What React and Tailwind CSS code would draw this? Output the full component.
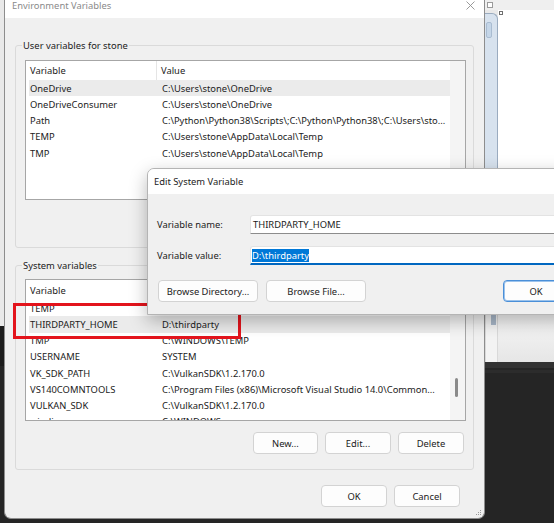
import React from "react";

const userRows = [
  ["OneDrive", "C:\\Users\\stone\\OneDrive", true],
  ["OneDriveConsumer", "C:\\Users\\stone\\OneDrive", false],
  ["Path", "C:\\Python\\Python38\\Scripts\\;C:\\Python\\Python38\\;C:\\Users\\sto...", false],
  ["TEMP", "C:\\Users\\stone\\AppData\\Local\\Temp", false],
  ["TMP", "C:\\Users\\stone\\AppData\\Local\\Temp", false],
];

const sysRows = [
  ["TEMP", "C:\\WINDOWS\\TEMP", false],
  ["THIRDPARTY_HOME", "D:\\thirdparty", true],
  ["TMP", "C:\\WINDOWS\\TEMP", false],
  ["USERNAME", "SYSTEM", false],
  ["VK_SDK_PATH", "C:\\VulkanSDK\\1.2.170.0", false],
  ["VS140COMNTOOLS", "C:\\Program Files (x86)\\Microsoft Visual Studio 14.0\\Common...", false],
  ["VULKAN_SDK", "C:\\VulkanSDK\\1.2.170.0", false],
  ["windir", "C:\\WINDOWS", false],
];

function Row({ name, value, selected }) {
  return (
    <div
      className={
        selected
          ? "flex h-[16.25px] shrink-0 items-center bg-[#ebebeb]"
          : "flex h-[16.25px] shrink-0 items-center"
      }
    >
      <div className="w-[133px] shrink-0 truncate pl-[1px]">{name}</div>
      <div className="flex-1 whitespace-nowrap">{value}</div>
    </div>
  );
}

function ListBox({ rows, height, headerH, scrollThumb }) {
  return (
    <div
      className={
        height === 140
          ? "ml-[9px] flex h-[140px] w-[441px] border border-[#a6a6a6] bg-white"
          : "ml-[9px] flex h-[142px] w-[441px] border border-[#a6a6a6] bg-white"
      }
    >
      <div className="flex min-w-0 flex-1 flex-col overflow-hidden pl-[3px]">
        <div
          className={
            headerH === 19
              ? "flex h-[19px] shrink-0 items-center bg-white"
              : "flex h-[20px] shrink-0 items-center bg-white"
          }
        >
          <div className="flex h-full w-[128px] items-center border-r border-[#e5e5e5] pl-[1px]">
            Variable
          </div>
          <div className="pl-[4px]">Value</div>
        </div>
        {rows.map((r, i) => (
          <Row key={i} name={r[0]} value={r[1]} selected={r[2]} />
        ))}
      </div>
      <div className="relative w-[15px] shrink-0 bg-[#f4f4f4]">
        {scrollThumb && (
          <div className="absolute left-[5px] top-[98px] h-[19px] w-[3px] rounded-full bg-[#8a8a8a]" />
        )}
      </div>
    </div>
  );
}

function Btn({ children, w = "w-[66px]", primary }) {
  return (
    <div
      className={
        primary
          ? `flex h-[22px] ${w} items-center justify-center rounded-[4px] border border-[#4a8fd8] bg-[#fdfdfd] shadow-[inset_0_0_0_1px_#9cc3ec]`
          : `flex h-[22px] ${w} items-center justify-center rounded-[4px] border border-[#d3d3d3] bg-[#fdfdfd]`
      }
    >
      {children}
    </div>
  );
}

export default function App() {
  return (
    <div className="relative h-[523px] w-[554px] overflow-hidden bg-[#252525] font-['Noto_Sans','Open_Sans',sans-serif] text-[9.4px] leading-[13px] text-[#1b1b1b]">
      {/* desktop background pieces */}
      <div className="absolute left-0 top-0 h-[362px] w-[554px] bg-[#e9e9e9]" />
      <div className="absolute left-0 top-[326px] h-[40px] w-[5px] bg-[#1c1c1c]" />
      <div className="absolute left-[485px] top-0 h-[10px] w-[69px] bg-[#efefef]" />
      <div className="absolute left-[487px] top-[2px] h-[6px] w-[6px] border border-[#9a9a9a] bg-white" />
      <div className="absolute left-[498px] top-[10px] h-[160px] w-[56px] bg-white" />
      <div className="absolute left-[499px] top-[11px] h-[4px] w-[4px] border border-[#6f6f6f] bg-white" />
      <div className="absolute left-[485px] top-[13px] h-[160px] w-[13px] rounded-tr-[6px] border-r border-t border-[#9aabbf] bg-[#d7e2ee]" />
      <div className="absolute left-[486px] top-[22px] h-[16px] w-[6px] rounded-[2px] border border-[#a9bcd1] bg-[#c5d6e8]" />
      <div className="absolute left-[485px] top-[315px] h-[47px] w-[69px] bg-gradient-to-b from-[#f6f6f6] to-[#e6e6e6]" />
      <div className="absolute left-[485px] top-[315px] h-[47px] w-[13px] border-x border-[#d9d9d9] bg-[#f3f3f3]" />
      <div className="absolute left-[491px] top-[315px] h-[10px] w-[5px] bg-[#a9b8c9]" />
      <div className="absolute left-[485px] top-[362px] h-[6px] w-[69px] bg-[#323232]" />
      <div className="absolute left-[485px] top-[370px] h-[3px] w-[69px] bg-[#2c2c2c]" />

      {/* Environment Variables window */}
      <div className="absolute left-[4px] top-0 flex h-[519px] w-[481px] flex-col overflow-hidden rounded-b-[7px] border-x border-b border-[#8d8d8d] bg-[#f0f0f0]">
        <div className="relative flex h-[18px] shrink-0 items-start bg-white pl-[7px]">
          <span className="leading-[12px] text-[#8a8a8a]">Environment Variables</span>
          <svg
            className="absolute left-[461px] top-[1px]"
            width="9"
            height="9"
            viewBox="0 0 9 9"
          >
            <path d="M0.5 0.5 L8.5 8.5 M8.5 0.5 L0.5 8.5" stroke="#8f8f8f" strokeWidth="0.9" />
          </svg>
        </div>

        {/* User variables group */}
        <div className="relative ml-[10px] mt-[27px] flex h-[203px] w-[459px] shrink-0 flex-col rounded-[3px] border border-[#dadada]">
          <span className="absolute -top-[7px] left-[6px] bg-[#f0f0f0] px-[1px]">
            User variables for stone
          </span>
          <div className="mt-[14px]">
            <ListBox rows={userRows} height={140} headerH={19} />
          </div>
          <div className="mt-[12px] flex justify-end gap-[8px] pr-[9px]">
            <Btn>New...</Btn>
            <Btn>Edit...</Btn>
            <Btn>Delete</Btn>
          </div>
        </div>

        {/* System variables group */}
        <div className="relative ml-[10px] mt-[17px] flex h-[205px] w-[459px] shrink-0 flex-col rounded-[3px] border border-[#dadada]">
          <span className="absolute -top-[7px] left-[6px] bg-[#f0f0f0] px-[1px]">
            System variables
          </span>
          <div className="mt-[13px]">
            <ListBox rows={sysRows} height={142} headerH={20} scrollThumb />
          </div>
          <div className="mt-[11px] flex justify-end gap-[7px] pr-[9px]">
            <Btn w="w-[65px]">New...</Btn>
            <Btn>Edit...</Btn>
            <Btn>Delete</Btn>
          </div>
        </div>

        <div className="mt-[15px] flex justify-end gap-[7px] pr-[24px]">
          <Btn>OK</Btn>
          <Btn>Cancel</Btn>
        </div>

        <svg className="absolute bottom-[2px] right-[2px]" width="7" height="7" viewBox="0 0 7 7">
          <rect x="5" y="1" width="1" height="1" fill="#9a9a9a" />
          <rect x="3" y="3" width="1" height="1" fill="#9a9a9a" />
          <rect x="5" y="3" width="1" height="1" fill="#9a9a9a" />
          <rect x="1" y="5" width="1" height="1" fill="#9a9a9a" />
          <rect x="3" y="5" width="1" height="1" fill="#9a9a9a" />
          <rect x="5" y="5" width="1" height="1" fill="#9a9a9a" />
        </svg>
      </div>

      {/* red highlight rectangle */}
      <div className="absolute left-[13px] top-[303px] h-[36px] w-[228px] border-[3px] border-[#e3141c]" />

      {/* Edit System Variable dialog */}
      <div className="absolute left-[147px] top-[168px] flex h-[147px] w-[440px] flex-col overflow-hidden rounded-tl-[7px] border border-[#b4b4b4] bg-[#f0f0f0] shadow-[0_6px_18px_rgba(0,0,0,0.28)]">
        <div className="flex h-[25px] shrink-0 items-center bg-white pl-[6px]">
          Edit System Variable
        </div>
        <div className="mt-[21px] flex h-[19px] items-center pl-[9px]">
          <div className="w-[93px] shrink-0">Variable name:</div>
          <div className="flex h-[19px] w-[320px] items-center rounded-t-[3px] border border-[#e3e3e3] border-b-[#8c8c8c] bg-white pl-[2px]">
            THIRDPARTY_HOME
          </div>
        </div>
        <div className="mt-[12px] flex h-[19px] items-center pl-[9px]">
          <div className="w-[93px] shrink-0">Variable value:</div>
          <div className="flex h-[19px] w-[320px] items-center rounded-t-[3px] border border-[#e3e3e3] border-b-2 border-b-[#0067c0] bg-white pl-[1px]">
            <span className="bg-[#0078d7] text-white">D:\thirdparty</span>
          </div>
        </div>
        <div className="mt-[15px] flex items-center pl-[10px]">
          <Btn w="w-[100px]">Browse Directory...</Btn>
          <div className="ml-[8px]">
            <Btn w="w-[100px]">Browse File...</Btn>
          </div>
          <div className="ml-[137px]">
            <Btn primary>OK</Btn>
          </div>
        </div>
      </div>
    </div>
  );
}
